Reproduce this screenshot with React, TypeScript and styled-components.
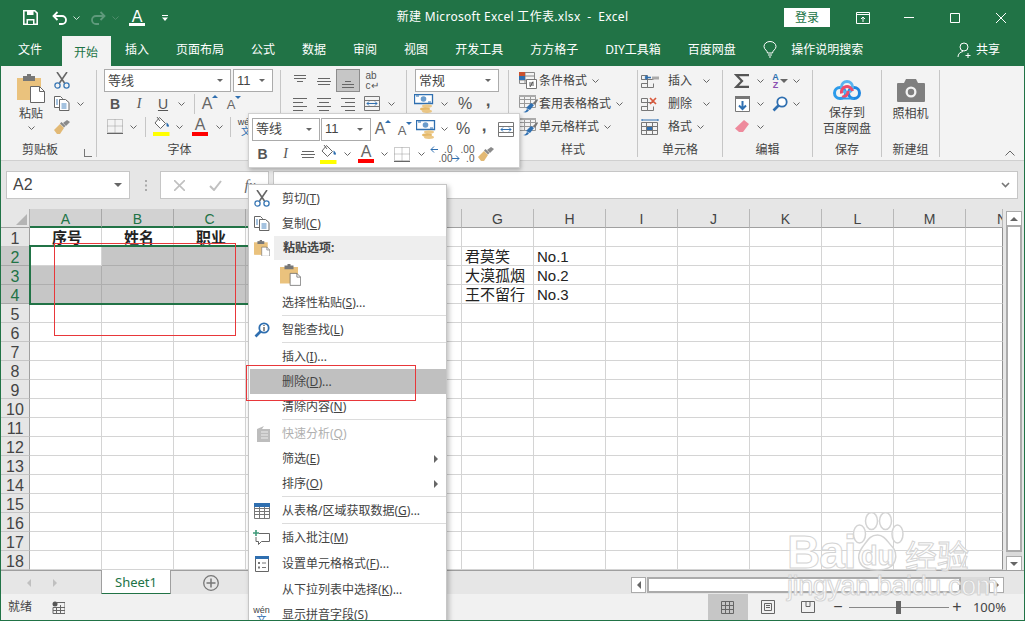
import React from 'react'
import styled, { createGlobalStyle } from 'styled-components'

const UI = '"Noto Sans", "Noto Sans CJK SC", sans-serif'
const CELL = '"Liberation Sans", "Noto Sans CJK SC", sans-serif'
const GREEN = '#217346'
const TXT = '#444'

const Global = createGlobalStyle`
  html, body { margin: 0; padding: 0; background: #fff; }
  * { box-sizing: border-box; }
  svg { display: block; flex: none; }
`

const Win = styled.div`
  position: relative;
  width: 1025px;
  height: 621px;
  overflow: hidden;
  border: 1px solid ${GREEN};
  border-top: none;
  display: flex;
  flex-direction: column;
  font: 12px/16px ${UI};
  color: ${TXT};
  background: #e6e6e6;
`

/* ---------- generic small parts ---------- */
const Slot = styled.div<{ $w: number; $ml?: number; $active?: boolean }>`
  flex: none;
  width: ${p => p.$w}px;
  margin-left: ${p => p.$ml || 0}px;
  height: 100%;
  display: flex;
  align-items: center;
  justify-content: center;
  background: ${p => (p.$active ? '#c6c6c6' : 'transparent')};
  outline: ${p => (p.$active ? '1px solid #8c8c8c' : 'none')};
  outline-offset: -1px;
`
const Tri = styled.i<{ $dir?: string; $c?: string; $s?: number }>`
  display: block;
  flex: none;
  width: 0;
  height: 0;
  border: ${p => p.$s || 4}px solid transparent;
  ${p => (p.$dir === 'up' ? `border-bottom-color:${p.$c || '#666'};border-top-width:0;` : '')}
  ${p => (p.$dir === 'left' ? `border-right-color:${p.$c || '#666'};border-left-width:0;` : '')}
  ${p => (p.$dir === 'right' ? `border-left-color:${p.$c || '#666'};border-right-width:0;` : '')}
  ${p => (!p.$dir || p.$dir === 'down' ? `border-top-color:${p.$c || '#666'};border-bottom-width:0;` : '')}
`
const Chevron = ({ c = '#666' }: { c?: string }) => (
  <svg width="7" height="4" viewBox="0 0 7 4"><path d="M.5.500l3 3 3-3" fill="none" stroke={c} /></svg>
)
const Caret = ({ w = 12, ml = 0 }: { w?: number; ml?: number }) => (
  <Slot $w={w} $ml={ml}><Chevron /></Slot>
)

/* ---------- icons ---------- */
const PasteIcon = ({ w = 28 }: { w?: number }) => (
  <svg width={w} height={w * 29 / 28} viewBox="0 0 28 29">
    <path d="M0 4h24v22H0z" fill="#eac27d" />
    <path d="M6 2h12v5H6z" fill="#777" />
    <path d="M10 0h4v3h-4z" fill="#777" />
    <path d="M13.500 12.500h9l5 5v11h-14z" fill="#fff" stroke="#666" />
    <path d="M22.500 12.500v5h5" fill="none" stroke="#666" />
  </svg>
)
const CutIcon = () => (
  <svg width="16" height="17" viewBox="0 0 16 17">
    <path d="M3 0l7.500 11M13 0L5.500 11" stroke="#666" strokeWidth="1.600" fill="none" />
    <circle cx="3.500" cy="13.500" r="2.600" fill="none" stroke="#3a78b5" strokeWidth="1.300" />
    <circle cx="12.500" cy="13.500" r="2.600" fill="none" stroke="#3a78b5" strokeWidth="1.300" />
  </svg>
)
const CopyIcon = () => (
  <svg width="16" height="15" viewBox="0 0 16 15">
    <path d="M.5.500h6l2 2v9h-8z" fill="#fff" stroke="#666" />
    <path d="M5.500 3.500h6l3.500 3v8h-9.500z" fill="#fff" stroke="#666" />
    <path d="M7.500 8h5M7.500 10h5M7.500 12h5M2 4h2M2 6h2M2 8h2" stroke="#4a86c0" />
  </svg>
)
const BrushIcon = () => (
  <svg width="16" height="14" viewBox="0 0 16 14">
    <path d="M0 10l6-6 4 4-4 6H3z" fill="#e2b975" />
    <path d="M6 3.500l1.500-1.500 4 4L10 7.500z" fill="#888" />
    <path d="M9 3l4-3 3 2-4 4z" fill="#8a8a8a" />
  </svg>
)
const BorderIcon = () => (
  <svg width="16" height="15" viewBox="0 0 16 15">
    <path d="M.5.500h15v13H.5zM8 .5v13M.5 7h15" fill="none" stroke="#999" strokeDasharray="1 1" />
    <path d="M0 14.500h16" stroke="#666" />
  </svg>
)
const FillIcon = () => (
  <svg width="17" height="19" viewBox="0 0 17 19">
    <path d="M6.500.5l6 6-5 5-5.500-5.500z" fill="#fff" stroke="#666" />
    <path d="M4 0l3 4" stroke="#666" />
    <path d="M13.500 5.500c1.500 1 2.500 2.500 2.500 3.500s-2 1-2.500 0z" fill="#2f6fb0" />
    <path d="M0 15h16.500v4H0z" fill="#ff0" />
  </svg>
)
const Lines = ({ kind }: { kind: string }) => {
  const rows: Record<string, [number, number, number][]> = {
    top: [[2, 14, 2], [2, 14, 5], [5, 11, 8]],
    mid: [[2, 14, 5], [1, 15, 8], [2, 14, 11]],
    bottom: [[5, 11, 8], [2, 14, 11], [2, 14, 14]],
    left: [[1, 15, 2], [1, 11, 6], [1, 15, 10], [1, 11, 14]],
    center: [[1, 15, 2], [3, 13, 6], [1, 15, 10], [3, 13, 14]],
    right: [[1, 15, 2], [5, 15, 6], [1, 15, 10], [5, 15, 14]],
  }
  return (
    <svg width="16" height="16" viewBox="0 0 16 16">
      {rows[kind].map(([a, b, y]) => <path key={y} d={`M${a} ${y + 0.5}H${b}`} stroke="#666" />)}
    </svg>
  )
}
const MergeIcon = () => (
  <svg width="16" height="15" viewBox="0 0 16 15">
    <path d="M.5.500h15v14H.5zM.5 4.500h15M.5 10.500h15" fill="none" stroke="#777" />
    <path d="M3 7.500h10M3 7.500l2-2M3 7.500l2 2M13 7.500l-2-2M13 7.500l-2 2" fill="none" stroke="#2f6fb0" />
  </svg>
)
const CurrencyIcon = () => (
  <svg width="20" height="19" viewBox="0 0 20 19">
    <path d="M.5.500h18v9H.5z" fill="#fff" stroke="#2f6fb0" strokeWidth="1.300" />
    <circle cx="9.500" cy="5" r="2.800" fill="#6a9ccc" />
    <path d="M2 2h3M14 8h3" stroke="#2f6fb0" />
    <ellipse cx="13" cy="12" rx="5" ry="1.800" fill="#ecc886" />
    <ellipse cx="11" cy="15" rx="5" ry="1.800" fill="#e5b868" />
    <ellipse cx="13" cy="17.200" rx="5" ry="1.700" fill="#ecc886" />
  </svg>
)
const GridBase = () => (
  <path d="M.5 2.500h6v4h-6zM.5 6.500h12M.5 10.500h6v4h-6zM6.500 6.500v8h6v-4" fill="none" stroke="#777" />
)
const InsertIcon = () => (
  <svg width="18" height="16" viewBox="0 0 18 16">
    <GridBase />
    <path d="M11 3.500h7v3h-7z" fill="#aaa" />
    <path d="M10 4.500H4M4 4.500l2-2M4 4.500l2 2" fill="none" stroke="#2f6fb0" strokeWidth="1.300" />
  </svg>
)
const DeleteIcon = () => (
  <svg width="18" height="16" viewBox="0 0 18 16">
    <GridBase />
    <path d="M9 2l6 6M15 2L9 8" stroke="#d9583b" strokeWidth="1.700" />
  </svg>
)
const FormatIcon = () => (
  <svg width="18" height="17" viewBox="0 0 18 17">
    <path d="M1 1v2M17 1v2M1 2h16" stroke="#2f6fb0" />
    <path d="M.5 4.500h16v12H.5zM.5 8.500h16M.5 12.500h16M5.500 4.500v12M11.500 4.500v12" fill="none" stroke="#777" />
    <path d="M6 9h5v3H6z" fill="#2f6fb0" />
  </svg>
)
const CondIcon = () => (
  <svg width="18" height="17" viewBox="0 0 18 17">
    <path d="M.5.500h15v11H.5zM.5 4h15M.5 8h15M6 .5v11" fill="none" stroke="#888" />
    <path d="M0 0h6v4H0z" fill="#c9502e" />
    <path d="M0 4h6v4H0z" fill="#2f6fb0" />
    <path d="M7.500 7.500h10v9h-10z" fill="#fff" stroke="#777" />
    <path d="M10 11h5M10 13h5M14 9.500l-3 5.500" stroke="#555" />
  </svg>
)
const TableBrushIcon = () => (
  <svg width="19" height="18" viewBox="0 0 19 18">
    <path d="M.5.500h16v12H.5zM.5 4.500h16M.5 8.500h16M5.500.5v12M11.500.5v12" fill="none" stroke="#999" />
    <path d="M0 0h17v2H0z" fill="#aaa" />
    <path d="M7 13l5-5 3 2-4 5z" fill="#2f6fb0" />
    <path d="M14 8l4-4 1 1-3 5z" fill="#777" />
    <path d="M4 17c2 0 3-1 4-3l2 1c-1 2-3 3-6 2z" fill="#2f6fb0" />
  </svg>
)
const SigmaIcon = () => (
  <svg width="16" height="14" viewBox="0 0 16 14">
    <path d="M15 1.200H2.500L8 7l-5.500 5.800H15" fill="none" stroke="#555" strokeWidth="2.200" />
  </svg>
)
const DownFillIcon = () => (
  <svg width="15" height="16" viewBox="0 0 15 16">
    <path d="M.5.500h14v15H.5z" fill="#fff" stroke="#777" />
    <path d="M0 0h15v3H0z" fill="#777" />
    <path d="M7.500 5v8M4 9.500l3.500 3.500L11 9.500" fill="none" stroke="#2f6fb0" strokeWidth="2" />
  </svg>
)
const Magnifier = ({ info }: { info?: boolean }) => (
  <svg width="16" height="16" viewBox="0 0 16 16">
    <circle cx="10" cy="6" r="4.700" fill="#fff" stroke="#2f6fb0" strokeWidth="1.800" />
    <path d="M6.500 9.500L1.500 14.500" stroke="#2f6fb0" strokeWidth="2.600" />
    {info && <path d="M10 3v1M10 5v4" stroke="#555" strokeWidth="1.300" />}
  </svg>
)
const EraserIcon = () => (
  <svg width="14" height="13" viewBox="0 0 14 13">
    <path d="M9 0l5 4-6 8H4L0 8.500z" fill="#ee8a9c" />
  </svg>
)
const CloudIcon = () => (
  <svg width="28" height="22" viewBox="0 0 28 22">
    <circle cx="7" cy="14" r="5.500" fill="none" stroke="#2b9bea" strokeWidth="3" />
    <circle cx="21" cy="14" r="5.500" fill="none" stroke="#1e86e0" strokeWidth="3" />
    <circle cx="14" cy="8" r="5.500" fill="none" stroke="#59b4f0" strokeWidth="3" />
    <path d="M8.500 14.500a5.500 5.500 0 0 1 11 -2.500" fill="none" stroke="#ee4d6b" strokeWidth="3" />
    <path d="M9 18a5.500 5.500 0 0 0 6-6" fill="none" stroke="#ee4d6b" strokeWidth="3" />
    <path d="M7 19.500h14" stroke="#2b9bea" strokeWidth="2" />
  </svg>
)
const CameraIcon = () => (
  <svg width="28" height="23" viewBox="0 0 28 23">
    <path d="M1 4h6l2-4h10l2 4h6a1 1 0 0 1 1 1v17a1 1 0 0 1-1 1H1a1 1 0 0 1-1-1V5a1 1 0 0 1 1-1z" fill="#7f7f7f" />
    <circle cx="14" cy="13" r="5.500" fill="#f3f3f3" />
    <circle cx="14" cy="13" r="3.200" fill="#7f7f7f" />
  </svg>
)
const QuickIcon = () => (
  <svg width="16" height="16" viewBox="0 0 16 16">
    <path d="M3 3l7-3-2 3h8v13H3z" fill="#bdbdbd" />
    <path d="M7 6h7M7 9h7M7 12h7" stroke="#eee" />
  </svg>
)
const TableIcon = () => (
  <svg width="16" height="16" viewBox="0 0 16 16">
    <path d="M.5.500h15v15H.5zM.5 5.500h15M.5 8.500h15M.5 11.500h15M5.500 4v11M10.500 4v11" fill="#fff" stroke="#777" />
    <path d="M0 0h16v4H0z" fill="#2f6fb0" />
  </svg>
)
const CommentIcon = () => (
  <svg width="17" height="16" viewBox="0 0 17 16">
    <path d="M6 3.500h10.500v8h-8l-3 3v-3H3V7" fill="#fff" stroke="#666" />
    <path d="M3 0v6M0 3h6" stroke="#3f9a7a" strokeWidth="1.600" />
  </svg>
)
const CellFormatIcon = () => (
  <svg width="14" height="16" viewBox="0 0 14 16">
    <path d="M.5.500h13v15H.5z" fill="#fff" stroke="#666" />
    <path d="M0 0h14v3H0z" fill="#2f6fb0" />
    <path d="M3 6h2v2H3zM3 10.500h2v2H3z" fill="#777" />
    <path d="M7 7h4M7 11.500h4" stroke="#777" />
  </svg>
)

/* ---------- title bar ---------- */
const TitleBar = styled.div`
  height: 33px;
  flex: none;
  background: ${GREEN};
  color: #fff;
  display: grid;
  grid-template-columns: 1fr auto 1fr;
  align-items: stretch;
`
const Qat = styled.div`
  display: flex;
  align-items: center;
  padding-left: 20px;
  height: 35px;
`
const Title = styled.div`
  line-height: 33px;
  white-space: pre;
  letter-spacing: .3px;
`
const WinControls = styled.div`
  display: flex;
  justify-content: flex-end;
  align-items: center;
`
const Login = styled.div`
  width: 46px;
  height: 19px;
  margin-top: -1px;
  background: #fff;
  color: ${GREEN};
  text-align: center;
  line-height: 19px;
  margin-right: 10px;
`
const QatA = styled.div`
  font: 16px/13px ${CELL};
  color: #fff;
  text-align: center;
  width: 16px;
  border-bottom: 3px solid #fff;
`
const WhiteChevron = () => <Chevron c="#cfe3d8" />

/* ---------- tabs ---------- */
const TabBar = styled.div`
  height: 33px;
  flex: none;
  background: ${GREEN};
  color: #fff;
  display: flex;
  padding-left: 3.500px;
`
const Tab = styled.div<{ $active?: boolean }>`
  padding: ${p => (p.$active ? '3px 12.500px 0' : '0 13.500px')};
  margin: ${p => (p.$active ? '3px 1px 0 6px' : '0')};
  line-height: ${p => (p.$active ? '27px' : '33px')};
  background: ${p => (p.$active ? '#f3f3f3' : 'transparent')};
  color: ${p => (p.$active ? GREEN : '#fff')};
  white-space: nowrap;
`
const TellMe = styled.div`
  display: flex;
  align-items: center;
  gap: 14px;
  margin-left: 14px;
`
const Share = styled.div`
  margin-left: auto;
  padding-right: 24px;
  display: flex;
  align-items: center;
  gap: 4px;
`

/* ---------- ribbon ---------- */
const Ribbon = styled.div`
  height: 95px;
  flex: none;
  display: flex;
  background: #f3f3f3;
  border-bottom: 1px solid #d0d0d0;
  padding-top: 3px;
`
const Group = styled.div<{ $w: number }>`
  flex: none;
  width: ${p => p.$w}px;
  height: 87px;
  display: flex;
  flex-direction: column;
  border-right: 1px solid #c6c6c6;
  margin-top: 1px;
`
const GroupBody = styled.div`
  height: 71px;
  margin-top: -1px;
  display: flex;
  flex-direction: column;
`
const GroupLabel = styled.div<{ $pr?: number }>`
  margin-top: 3px;
  height: 14px;
  line-height: 14px;
  text-align: center;
  white-space: nowrap;
  padding-right: ${p => p.$pr || 0}px;
`
const Row = styled.div<{ $pl?: number }>`
  height: 23px;
  flex: none;
  display: flex;
  align-items: center;
  padding-left: ${p => p.$pl || 0}px;
  white-space: nowrap;
`
const ClipBody = styled.div`
  display: flex;
  height: 71px;
  margin-top: -1px;
`
const PasteBtn = styled.div`
  width: 44px;
  margin-left: 8px;
  padding-top: 5px;
  display: flex;
  flex-direction: column;
  align-items: center;
`
const PasteText = styled.div`
  margin-top: 2px;
  line-height: 18px;
  margin-bottom: 3px;
`
const ClipLabel = styled.div`
  margin-top: 3px;
  height: 14px;
  line-height: 14px;
  display: flex;
  align-items: center;
`
const ClipText = styled.div`
  width: 78px;
  text-align: center;
`
const Launcher = styled.div`
  width: 8px;
  height: 8px;
  margin: 6px 0 0 5px;
  border-left: 1px solid #777;
  border-bottom: 1px solid #777;
`
const Select = styled.div<{ $w: number; $ml?: number }>`
  flex: none;
  width: ${p => p.$w}px;
  height: 23px;
  margin-left: ${p => p.$ml || 0}px;
  border: 1px solid #ababab;
  background: #fff;
  display: flex;
  align-items: center;
  justify-content: space-between;
  padding: 0 7px 0 3px;
  font-size: 13px;
  color: ${TXT};
  font-family: ${CELL};
`
const Letter = styled.span<{ $b?: boolean; $i?: boolean; $u?: boolean }>`
  font: ${p => (p.$i ? 'italic ' : '')}${p => (p.$b ? 'bold ' : '')}14px/16px ${p => (p.$i ? '"Liberation Serif", serif' : CELL)};
  color: #555;
  text-decoration: ${p => (p.$u ? 'underline' : 'none')};
`
const VRule = styled.div<{ $l: number; $r: number }>`
  width: 1px;
  height: 20px;
  flex: none;
  margin: 0 ${p => p.$r}px 0 ${p => p.$l}px;
  background: #c6c6c6;
`
const ColorA = styled.div<{ $c: string }>`
  width: 16px;
  font: 16px/14px ${CELL};
  color: #666;
  text-align: center;
  border-bottom: 4px solid ${p => p.$c};
`
const SizeA = styled.div`
  display: flex;
  align-items: flex-start;
  font: 16px/18px ${CELL};
  color: #666;
`
const SizeASmall = styled(SizeA)`
  font-size: 13px;
  padding-top: 3px;
`
const Wen = styled.div<{ $s?: number }>`
  font: ${p => p.$s || 9}px/9px ${CELL};
  color: #444;
  text-align: center;
`
const Zi = styled.div`
  font-size: 10px;
  line-height: 9px;
  color: #2f6fb0;
  text-align: center;
`
const WrapText = styled.div`
  font: 10px/10px ${CELL};
  color: #555;
`
const Percent = styled.div`
  font: 16px/20px ${CELL};
  color: #555;
`
const Comma = styled.div`
  font: bold 17px/16px ${CELL};
  color: #555;
  margin-top: -6px;
`
const StyleBtn = styled.div`
  margin-left: 1px;
`
const CellText = styled.div<{ $ml: number }>`
  margin-left: ${p => p.$ml}px;
`
const SortIcon = styled.div`
  display: flex;
  align-items: center;
  gap: 1px;
`
const AZ = styled.div`
  font: bold 9px/8px ${CELL};
  text-align: center;
  color: #2f6fb0;
  & > b { display: block; color: #8a4fb0; }
`
const TallBtn = styled.div`
  height: 71px;
  display: flex;
  flex-direction: column;
  align-items: center;
  padding-top: 10px;
  text-align: center;
  line-height: 16px;
`
const TallText = styled.div`
  margin-top: 4px;
`
const Collapse = styled.div`
  margin: auto 9px 4px auto;
`
const DecimalBtn = styled.div`
  display: grid;
  grid-template-columns: auto auto;
  column-gap: 1px;
  font: 10px/9px ${CELL};
  color: #555;
  align-items: center;
  justify-items: end;
`

/* ---------- formula bar ---------- */
const FormulaBar = styled.div`
  height: 48px;
  flex: none;
  padding: 10px 6px 10px 5px;
  display: flex;
  background: #e6e6e6;
`
const Box = styled.div`
  height: 28px;
  background: #fff;
  border: 1px solid #c6c6c6;
  display: flex;
  align-items: center;
`
const NameBox = styled(Box)`
  width: 124px;
  justify-content: space-between;
  padding: 0 7px 0 6px;
  font: 16px ${CELL};
  color: #444;
`
const Dots = styled.div`
  width: 30px;
  display: flex;
  align-items: center;
  justify-content: center;
`
const FxBox = styled(Box)`
  width: 109px;
  margin-right: 4px;
`
const FxGlyph = styled.div`
  font: italic 15px "Liberation Serif", serif;
  color: #666;
`
const InputBox = styled(Box)`
  flex: 1;
  justify-content: flex-end;
  padding-right: 4px;
`

/* ---------- sheet ---------- */
const Workspace = styled.div`
  height: 361px;
  flex: none;
  display: flex;
`
const Sheet = styled.div`
  position: relative;
  width: 1002px;
  height: 361px;
  overflow: hidden;
  display: grid;
  grid-template-columns: 29px repeat(13, 72px) 37px;
  grid-auto-rows: 19px;
  background: #fff;
  font: 15px/18px ${CELL};
`
const Corner = styled.div`
  background: #e6e6e6;
  border-right: 1px solid #b0b0b0;
  border-bottom: 1px solid #a0a0a0;
  display: flex;
  align-items: flex-end;
  justify-content: flex-end;
  padding: 0 2px 2px 0;
`
const CornerMark = styled.div`
  width: 11px;
  height: 11px;
  background: #b4b4b4;
  clip-path: polygon(100% 0, 100% 100%, 0 100%);
`
const ColHead = styled.div<{ $sel?: boolean; $clip?: boolean }>`
  background: ${p => (p.$sel ? '#d2d2d2' : '#e6e6e6')};
  color: ${p => (p.$sel ? GREEN : TXT)};
  border-right: 1px solid ${p => (p.$sel ? '#a8a8a8' : '#b8b8b8')};
  border-bottom: ${p => (p.$sel ? `2px solid ${GREEN}` : '1px solid #a0a0a0')};
  font-size: 14px;
  line-height: 18px;
  padding-top: 1px;
  text-align: ${p => (p.$clip ? 'left' : 'center')};
  padding-left: ${p => (p.$clip ? '31px' : '0')};
  overflow: hidden;
`
const RowHead = styled.div<{ $sel?: boolean }>`
  background: ${p => (p.$sel ? '#c9c9c9' : '#e6e6e6')};
  color: ${p => (p.$sel ? GREEN : TXT)};
  border-right: 1px solid #a0a0a0;
  border-bottom: 1px solid ${p => (p.$sel ? '#a8a8a8' : '#c6c6c6')};
  font-size: 16px;
  line-height: 19px;
  padding-top: 1px;
  text-align: center;
`
const Cell = styled.div<{ $sel?: boolean; $bold?: boolean; $last?: boolean }>`
  background: ${p => (p.$sel ? '#c6c6c6' : '#fff')};
  border-right: 1px solid ${p => (p.$last ? '#8f8f8f' : p.$sel ? '#aeaeae' : '#d4d4d4')};
  border-bottom: 1px solid ${p => (p.$sel ? '#aeaeae' : '#d4d4d4')};
  padding: 1px 0 0 3px;
  color: #222;
  white-space: nowrap;
  overflow: hidden;
  font-weight: ${p => (p.$bold ? 700 : 400)};
  text-align: ${p => (p.$bold ? 'center' : 'left')};
`
const Selection = styled.div`
  position: absolute;
  left: 28px;
  top: 36px;
  width: 290px;
  height: 60px;
  border: 2px solid ${GREEN};
  pointer-events: none;
`
const VScroll = styled.div`
  margin: 2px 2px 0 3px;
  width: 16px;
  display: flex;
  flex-direction: column;
  height: 360px;
`
const ScrollBtn = styled.div<{ $h?: number }>`
  flex: none;
  height: ${p => p.$h || 15}px;
  background: #fff;
  border: 1px solid #ababab;
  display: flex;
  align-items: center;
  justify-content: center;
`
const VThumb = styled.div`
  height: 326px;
  flex: none;
  background: #fff;
  border: 2px solid #ababab;
  border-top-width: 1px;
`
const VTrack = styled.div`
  flex: 1;
  background: #dadada;
`

/* ---------- sheet tabs + status ---------- */
const Footer = styled.div`
  height: 24px;
  flex: none;
  display: flex;
  align-items: stretch;
  background: #e6e6e6;
  border-top: 1px solid #9f9f9f;
`
const NavArrows = styled.div`
  width: 100px;
  display: flex;
  align-items: center;
  padding-left: 26px;
  gap: 22px;
`
const SheetTab = styled.div`
  width: 70px;
  margin-top: -1px;
  height: 25px;
  background: #fff;
  border: 1px solid #9f9f9f;
  border-top: none;
  border-bottom: 2px solid ${GREEN};
  color: ${GREEN};
  text-align: center;
  font: 13px/25px ${UI};
`
const AddSheet = styled.div`
  margin-left: 32px;
  display: flex;
  align-items: center;
`
const HScroll = styled.div`
  margin: 6px 20px 1px auto;
  display: flex;
  width: 373px;
`
const HThumb = styled.div`
  width: 314px;
  margin-left: 1px;
  background: #fff;
  border: 2px solid #ababab;
`
const HTrack = styled.div`
  flex: 1;
  background: #dadada;
`
const ArrowBox = styled(ScrollBtn)`
  width: 15px;
  height: 100%;
`
const Status = styled.div`
  height: 26px;
  flex: none;
  background: #f1f1f1;
  display: flex;
  align-items: center;
  padding-left: 7px;
`
const ViewBtns = styled.div`
  margin-left: auto;
  display: flex;
  height: 100%;
`
const ViewBtn = styled(Slot)`
  background: ${p => (p.$active ? '#c6c6c6' : 'transparent')};
  outline: none;
`
const Zoom = styled.div`
  display: flex;
  align-items: center;
  margin-right: 18px;
  color: #444;
`
const ZoomTrack = styled.div`
  position: relative;
  width: 100px;
  height: 1px;
  margin: 0 1px 0 4px;
  background: #888;
`
const ZoomThumb = styled.div`
  position: absolute;
  left: 47px;
  top: -6px;
  width: 5px;
  height: 13px;
  background: #666;
`
const ZoomSign = styled.div`
  font: 16px/16px ${CELL};
  width: 14px;
  text-align: center;
  color: #444;
`
const ZoomMinus = styled(ZoomSign)`
  margin-left: 3px;
`
const ZoomText = styled.div`
  font: 13px/16px ${UI};
  margin-left: 9px;
`

/* ---------- mini toolbar ---------- */
const MiniBar = styled.div`
  position: absolute;
  left: 247px;
  top: 113px;
  width: 272px;
  height: 55px;
  background: #fff;
  border: 1px solid #d0d0d0;
  box-shadow: 1px 2px 4px rgba(0, 0, 0, .25);
  padding: 3px 0 0 3px;
`
const MiniRow = styled.div<{ $h: number; $mt?: number }>`
  height: ${p => p.$h}px;
  margin-top: ${p => p.$mt || 0}px;
  display: flex;
  align-items: center;
`

/* ---------- context menu ---------- */
const Menu = styled.div`
  position: absolute;
  left: 247px;
  top: 184px;
  width: 199px;
  height: 460px;
  background: #fff;
  border: 1px solid #c6c6c6;
  box-shadow: 2px 2px 5px rgba(0, 0, 0, .25);
  padding-top: 1px;
`
const Item = styled.div<{ $h?: number; $hot?: boolean; $off?: boolean }>`
  height: ${p => p.$h || 25}px;
  margin-left: ${p => (p.$hot ? 1 : 0)}px;
  display: flex;
  align-items: center;
  background: ${p => (p.$hot ? '#c0c0c0' : 'transparent')};
  color: ${p => (p.$off ? '#b0b0b0' : TXT)};
`
const ItemIcon = styled.div<{ $hot?: boolean }>`
  width: ${p => (p.$hot ? 24 : 25)}px;
  flex: none;
  display: flex;
  flex-direction: column;
  align-items: center;
  justify-content: center;
`
const ItemText = styled.div`
  margin-left: 8px;
  white-space: nowrap;
`
const ItemHead = styled.div`
  flex: 1;
  height: 24px;
  line-height: 24px;
  padding-left: 9px;
  background: #eeeeee;
  font-weight: 700;
`
const PasteOption = styled.div`
  margin-left: 6px;
`
const Sub = styled.div`
  margin-left: auto;
  margin-right: 8px;
`
const MenuSep = styled.div`
  height: 2px;
  margin-left: 33px;
  border-top: 1px solid #dcdcdc;
`

/* ---------- annotation + watermark ---------- */
const RedBox = styled.div<{ $l: number; $t: number; $w: number; $h: number }>`
  position: absolute;
  left: ${p => p.$l}px;
  top: ${p => p.$t}px;
  width: ${p => p.$w}px;
  height: ${p => p.$h}px;
  border: 1px solid #e8373a;
  pointer-events: none;
`
const Watermark = styled.div`
  position: absolute;
  left: 786px;
  top: 512px;
  width: 190px;
  color: rgba(255, 255, 255, .85);
  -webkit-text-stroke: 1px #d4d4d4;
  pointer-events: none;
`
const MarkTop = styled.div`
  display: flex;
  align-items: flex-end;
  height: 60px;
`
const MarkBai = styled.div`
  font: bold 46px/40px ${CELL};
  width: 66px;
  letter-spacing: -1px;
`
const Paw = styled.div`
  position: relative;
  width: 55px;
  height: 60px;
  margin-left: -3px;
`
const MarkDu = styled.div`
  position: absolute;
  left: 11px;
  bottom: 2px;
  font: bold 27px/28px ${CELL};
`
const MarkJy = styled.div`
  font: 32px/36px "Noto Sans CJK SC", sans-serif;
  white-space: nowrap;
`
const MarkUrl = styled.div`
  margin-top: 3px;
  font: 27px/23px ${CELL};
  white-space: nowrap;
  letter-spacing: -.4px;
`

const COLS = 'ABCDEFGHIJKLMN'.split('')
const DATA: Record<string, string> = {
  A1: '序号', B1: '姓名', C1: '职业',
  G2: '君莫笑', H2: 'No.1', G3: '大漠孤烟', H3: 'No.2', G4: '王不留行', H4: 'No.3',
}
const SEL_COLS = 'ABCD'
const TABS = ['插入', '页面布局', '公式', '数据', '审阅', '视图', '开发工具', '方方格子', 'DIY工具箱', '百度网盘']

const isSel = (c: string, r: number) => SEL_COLS.includes(c) && r >= 2 && r <= 4 && !(c === 'A' && r === 2)

const Grid = () => (
  <Sheet>
    <Corner><CornerMark /></Corner>
    {COLS.map(c => <ColHead key={c} $sel={SEL_COLS.includes(c)} $clip={c === 'N'}>{c}</ColHead>)}
    {Array.from({ length: 18 }, (_, i) => i + 1).map(r => (
      <React.Fragment key={r}>
        <RowHead $sel={r >= 2 && r <= 4}>{r}</RowHead>
        {COLS.map(c => (
          <Cell key={c} $sel={isSel(c, r)} $bold={r === 1} $last={c === 'N'}>{DATA[c + r]}</Cell>
        ))}
      </React.Fragment>
    ))}
    <Selection />
  </Sheet>
)

const ContextMenu = () => (
  <Menu>
    <Item><ItemIcon><CutIcon /></ItemIcon><ItemText>剪切(<u>T</u>)</ItemText></Item>
    <Item><ItemIcon><CopyIcon /></ItemIcon><ItemText>复制(<u>C</u>)</ItemText></Item>
    <Item $h={24}><ItemIcon><PasteIcon w={16} /></ItemIcon><ItemHead>粘贴选项:</ItemHead></Item>
    <Item $h={30}><ItemIcon /><PasteOption><PasteIcon w={21} /></PasteOption></Item>
    <Item><ItemIcon /><ItemText>选择性粘贴(<u>S</u>)...</ItemText></Item>
    <MenuSep />
    <Item><ItemIcon><Magnifier info /></ItemIcon><ItemText>智能查找(<u>L</u>)</ItemText></Item>
    <MenuSep />
    <Item><ItemIcon /><ItemText>插入(<u>I</u>)...</ItemText></Item>
    <Item $hot><ItemIcon $hot /><ItemText>删除(<u>D</u>)...</ItemText></Item>
    <Item><ItemIcon /><ItemText>清除内容(<u>N</u>)</ItemText></Item>
    <MenuSep />
    <Item $off><ItemIcon><QuickIcon /></ItemIcon><ItemText>快速分析(<u>Q</u>)</ItemText></Item>
    <Item><ItemIcon /><ItemText>筛选(<u>E</u>)</ItemText><Sub><Tri $dir="right" $s={4} /></Sub></Item>
    <Item><ItemIcon /><ItemText>排序(<u>O</u>)</ItemText><Sub><Tri $dir="right" $s={4} /></Sub></Item>
    <MenuSep />
    <Item><ItemIcon><TableIcon /></ItemIcon><ItemText>从表格/区域获取数据(<u>G</u>)...</ItemText></Item>
    <MenuSep />
    <Item $h={26}><ItemIcon><CommentIcon /></ItemIcon><ItemText>插入批注(<u>M</u>)</ItemText></Item>
    <Item $h={26}><ItemIcon><CellFormatIcon /></ItemIcon><ItemText>设置单元格格式(<u>F</u>)...</ItemText></Item>
    <Item><ItemIcon /><ItemText>从下拉列表中选择(<u>K</u>)...</ItemText></Item>
    <Item><ItemIcon><Wen>wén</Wen><Zi>文</Zi></ItemIcon><ItemText>显示拼音字段(<u>S</u>)</ItemText></Item>
  </Menu>
)

const MiniToolbar = () => (
  <MiniBar>
    <MiniRow $h={24}>
      <Select $w={68}>等线<Tri $s={3} /></Select>
      <Select $w={50} $ml={1}>11<Tri $s={3} /></Select>
      <Slot $w={22} $ml={1}><SizeA>A<Tri $dir="up" $c="#2f6fb0" $s={3} /></SizeA></Slot>
      <Slot $w={22}><SizeASmall>A<Tri $dir="down" $c="#2f6fb0" $s={3} /></SizeASmall></Slot>
      <Slot $w={20}><CurrencyIcon /></Slot>
      <Caret w={16} />
      <Slot $w={22}><Percent>%</Percent></Slot>
      <Slot $w={20}><Comma>,</Comma></Slot>
      <Slot $w={24}><MergeIcon /></Slot>
    </MiniRow>
    <MiniRow $h={22} $mt={2}>
      <Slot $w={23} $ml={-1}><Letter $b>B</Letter></Slot>
      <Slot $w={23}><Letter $i>I</Letter></Slot>
      <Slot $w={21}><Lines kind="mid" /></Slot>
      <Slot $w={20}><FillIcon /></Slot>
      <Caret w={18} />
      <Slot $w={20}><ColorA $c="#f00">A</ColorA></Slot>
      <Caret w={16} />
      <Slot $w={20}><BorderIcon /></Slot>
      <Caret w={18} />
      <Slot $w={22}>
        <DecimalBtn>
          <svg width="8" height="7" viewBox="0 0 8 7"><path d="M8 3.500H1M1 3.500l3-3M1 3.500l3 3" fill="none" stroke="#2f6fb0" /></svg>
          <span>.0</span><span />
          <span>.00</span>
        </DecimalBtn>
      </Slot>
      <Slot $w={22}>
        <DecimalBtn>
          <span />
          <span>.00</span>
          <svg width="8" height="7" viewBox="0 0 8 7"><path d="M0 3.500h7M7 3.500l-3-3M7 3.500l-3 3" fill="none" stroke="#2f6fb0" /></svg>
          <span>.0</span>
        </DecimalBtn>
      </Slot>
      <Slot $w={24}><BrushIcon /></Slot>
    </MiniRow>
  </MiniBar>
)

const RibbonPanel = () => (
  <Ribbon>
    <Group $w={96}>
      <ClipBody>
        <PasteBtn>
          <PasteIcon />
          <PasteText>粘贴</PasteText>
          <Chevron />
        </PasteBtn>
        <div>
          <Row><Slot $w={18}><CutIcon /></Slot></Row>
          <Row><Slot $w={18}><CopyIcon /></Slot><Caret w={18} /></Row>
          <Row><Slot $w={18}><BrushIcon /></Slot></Row>
        </div>
      </ClipBody>
      <ClipLabel><ClipText>剪贴板</ClipText><Launcher /></ClipLabel>
    </Group>
    <Group $w={184}>
      <GroupBody>
        <Row $pl={7}>
          <Select $w={127}>等线<Tri $s={3} /></Select>
          <Select $w={40} $ml={2}>11<Tri $s={3} /></Select>
        </Row>
        <Row $pl={6}>
          <Slot $w={24}><Letter $b>B</Letter></Slot>
          <Slot $w={24}><Letter $i>I</Letter></Slot>
          <Slot $w={24}><Letter $u>U</Letter></Slot>
          <Caret />
          <VRule $l={7} $r={3} />
          <Slot $w={24}><SizeA>A<Tri $dir="up" $c="#2f6fb0" $s={3} /></SizeA></Slot>
          <Slot $w={24}><SizeASmall>A<Tri $dir="down" $c="#2f6fb0" $s={3} /></SizeASmall></Slot>
        </Row>
        <Row $pl={6}>
          <Slot $w={24}><BorderIcon /></Slot>
          <Caret />
          <VRule $l={6} $r={3} />
          <Slot $w={24}><FillIcon /></Slot>
          <Caret />
          <Slot $w={30}><ColorA $c="#f00">A</ColorA></Slot>
          <Caret w={8} />
          <VRule $l={7} $r={3} />
          <Slot $w={24}><div><Wen>wén</Wen><Zi>文</Zi></div></Slot>
        </Row>
      </GroupBody>
      <GroupLabel $pr={18}>字体</GroupLabel>
    </Group>
    <Group $w={126}>
      <GroupBody>
        <Row $pl={7}>
          <Slot $w={24}><Lines kind="top" /></Slot>
          <Slot $w={24}><Lines kind="mid" /></Slot>
          <Slot $w={24} $active><Lines kind="bottom" /></Slot>
          <Slot $w={24}><WrapText>ab<br />c↵</WrapText></Slot>
        </Row>
        <Row $pl={7}>
          <Slot $w={24}><Lines kind="left" /></Slot>
          <Slot $w={24}><Lines kind="center" /></Slot>
          <Slot $w={24}><Lines kind="right" /></Slot>
          <Slot $w={24}><MergeIcon /></Slot>
          <Caret w={14} />
        </Row>
      </GroupBody>
    </Group>
    <Group $w={102}>
      <GroupBody>
        <Row><Select $w={84} $ml={8}>常规<Tri $s={3} /></Select></Row>
        <Row $pl={5}>
          <Slot $w={24}><CurrencyIcon /></Slot>
          <Caret w={16} />
          <Slot $w={26}><Percent>%</Percent></Slot>
          <Slot $w={20}><Comma>,</Comma></Slot>
        </Row>
      </GroupBody>
    </Group>
    <Group $w={129}>
      <GroupBody>
        <Row $pl={9}><Slot $w={20}><CondIcon /></Slot><StyleBtn>条件格式</StyleBtn><Caret w={16} /></Row>
        <Row $pl={9}><Slot $w={20}><TableBrushIcon /></Slot><StyleBtn>套用表格格式</StyleBtn><Caret w={16} /></Row>
        <Row $pl={9}><Slot $w={20}><TableBrushIcon /></Slot><StyleBtn>单元格样式</StyleBtn><Caret w={16} /></Row>
      </GroupBody>
      <GroupLabel>样式</GroupLabel>
    </Group>
    <Group $w={85}>
      <GroupBody>
        <Row $pl={2}><Slot $w={20}><InsertIcon /></Slot><CellText $ml={8}>插入</CellText><Caret w={16} ml={6} /></Row>
        <Row $pl={2}><Slot $w={20}><DeleteIcon /></Slot><CellText $ml={8}>删除</CellText><Caret w={16} ml={6} /></Row>
        <Row $pl={2}><Slot $w={20}><FormatIcon /></Slot><CellText $ml={8}>格式</CellText><Caret w={16} /></Row>
      </GroupBody>
      <GroupLabel>单元格</GroupLabel>
    </Group>
    <Group $w={90}>
      <GroupBody>
        <Row $pl={7}>
          <Slot $w={24}><SigmaIcon /></Slot><Caret />
          <Slot $w={24} $ml={2}><SortIcon><AZ>A<b>Z</b></AZ><Tri $s={4} /></SortIcon></Slot><Caret w={8} />
        </Row>
        <Row $pl={7}>
          <Slot $w={24}><DownFillIcon /></Slot><Caret />
          <Slot $w={24} $ml={2}><Magnifier /></Slot><Caret w={8} />
        </Row>
        <Row $pl={7}><Slot $w={24}><EraserIcon /></Slot><Caret /></Row>
      </GroupBody>
      <GroupLabel>编辑</GroupLabel>
    </Group>
    <Group $w={69}>
      <GroupBody>
        <TallBtn><CloudIcon /><TallText>保存到<br />百度网盘</TallText></TallBtn>
      </GroupBody>
      <GroupLabel>保存</GroupLabel>
    </Group>
    <Group $w={58}>
      <GroupBody>
        <TallBtn><CameraIcon /><TallText>照相机</TallText></TallBtn>
      </GroupBody>
      <GroupLabel>新建组</GroupLabel>
    </Group>
    <Collapse>
      <svg width="10" height="6" viewBox="0 0 10 6"><path d="M.5 5.500L5 1l4.500 4.500" fill="none" stroke="#666" /></svg>
    </Collapse>
  </Ribbon>
)

const App = () => (
  <Win>
    <Global />
    <TitleBar>
      <Qat>
        <Slot $w={18}>
          <svg width="15" height="15" viewBox="0 0 15 15">
            <path d="M.8.800h11l2.400 2.400v11H.8z" fill="none" stroke="#fff" strokeWidth="1.600" />
            <path d="M4 1h6.500v4H4zM3.500 9h8v5h-8z" fill="#fff" />
            <path d="M5 10.500h5v3.500H5z" fill={GREEN} />
          </svg>
        </Slot>
        <Slot $w={16} $ml={13}>
          <svg width="16" height="14" viewBox="0 0 16 14">
            <path d="M5.500 1L1.500 5l4 4M2 5h8a3.600 3.600 0 0 1 0 8H7" fill="none" stroke="#fff" strokeWidth="1.800" />
          </svg>
        </Slot>
        <Slot $w={10} $ml={3}><WhiteChevron /></Slot>
        <Slot $w={16} $ml={9}>
          <svg width="16" height="14" viewBox="0 0 16 14">
            <path d="M10.500 1l4 4-4 4M14 5H6a3.600 3.600 0 0 0 0 8h3" fill="none" stroke="#5f9a7c" strokeWidth="1.800" />
          </svg>
        </Slot>
        <Slot $w={10} $ml={4}><Chevron c="#4f8c6b" /></Slot>
        <Slot $w={16} $ml={9}><QatA>A</QatA></Slot>
        <Slot $w={12} $ml={14}>
          <svg width="6" height="6" viewBox="0 0 6 6"><path d="M0 .5h6" stroke="#fff" /><path d="M0 2.500h6L3 6z" fill="#fff" /></svg>
        </Slot>
      </Qat>
      <Title>新建 Microsoft Excel 工作表.xlsx  -  Excel</Title>
      <WinControls>
        <Login>登录</Login>
        <Slot $w={46}>
          <svg width="14" height="12" viewBox="0 0 14 12">
            <path d="M.5.500h13v11H.5zM.5 2.500h13" fill="none" stroke="#fff" />
            <path d="M7 10V5M5 7l2-2 2 2" fill="none" stroke="#fff" />
          </svg>
        </Slot>
        <Slot $w={46}><svg width="10" height="1" viewBox="0 0 10 1"><path d="M0 .5h10" stroke="#fff" /></svg></Slot>
        <Slot $w={46}><svg width="10" height="10" viewBox="0 0 10 10"><path d="M.5.500h9v9h-9z" fill="none" stroke="#fff" /></svg></Slot>
        <Slot $w={46}><svg width="10" height="10" viewBox="0 0 10 10"><path d="M0 0l10 10M10 0L0 10" stroke="#fff" /></svg></Slot>
      </WinControls>
    </TitleBar>

    <TabBar>
      <Tab>文件</Tab>
      <Tab $active>开始</Tab>
      {TABS.map(t => <Tab key={t}>{t}</Tab>)}
      <TellMe>
        <svg width="14" height="17" viewBox="0 0 14 17">
          <path d="M4.500 12c0-2.500-3.500-3.500-3.500-6.500a6 5 0 0 1 12 0c0 3-3.500 4-3.500 6.500zM5 14h4M6 16h2" fill="none" stroke="#fff" />
        </svg>
        操作说明搜索
      </TellMe>
      <Share>
        <svg width="15" height="16" viewBox="0 0 15 16">
          <circle cx="7" cy="5" r="4" fill="none" stroke="#fff" />
          <path d="M1 15c0-3 2-5 5-5.500M11 11v5M8.500 13.500h5" fill="none" stroke="#fff" />
        </svg>
        共享
      </Share>
    </TabBar>

    <RibbonPanel />

    <FormulaBar>
      <NameBox>A2<Tri $s={4} /></NameBox>
      <Dots><svg width="3" height="11" viewBox="0 0 3 11"><path d="M1 0h2v2H1zM1 4.500h2v2H1zM1 9h2v2H1z" fill="#aaa" /></svg></Dots>
      <FxBox>
        <Slot $w={36}><svg width="11" height="11" viewBox="0 0 11 11"><path d="M0 0l11 11M11 0L0 11" stroke="#c0c0c0" strokeWidth="1.600" /></svg></Slot>
        <Slot $w={36}><svg width="13" height="11" viewBox="0 0 13 11"><path d="M1 6l4 4 7-9" fill="none" stroke="#c0c0c0" strokeWidth="2" /></svg></Slot>
        <Slot $w={34}><FxGlyph>fx</FxGlyph></Slot>
      </FxBox>
      <InputBox><Slot $w={16}><svg width="9" height="6" viewBox="0 0 9 6"><path d="M1 1l3.500 3.500L8 1" fill="none" stroke="#777" strokeWidth="1.600" /></svg></Slot></InputBox>
    </FormulaBar>

    <Workspace>
      <Grid />
      <VScroll>
        <ScrollBtn><Tri $dir="up" $s={4} /></ScrollBtn>
        <VThumb />
        <VTrack />
        <ScrollBtn><Tri $s={4} /></ScrollBtn>
      </VScroll>
    </Workspace>

    <Footer>
      <NavArrows><Tri $dir="left" $c="#c0c0c0" /><Tri $dir="right" $c="#c0c0c0" /></NavArrows>
      <SheetTab>Sheet1</SheetTab>
      <AddSheet>
        <svg width="16" height="16" viewBox="0 0 16 16">
          <circle cx="8" cy="8" r="7.300" fill="none" stroke="#777" strokeWidth="1.300" />
          <path d="M8 3.500v9M3.500 8h9" stroke="#777" strokeWidth="1.500" />
        </svg>
      </AddSheet>
      <HScroll>
        <ArrowBox><Tri $dir="left" /></ArrowBox>
        <HThumb />
        <HTrack />
        <ArrowBox><Tri $dir="right" /></ArrowBox>
      </HScroll>
    </Footer>

    <Status>
      就绪
      <Slot $w={14} $ml={19}>
        <svg width="13" height="13" viewBox="0 0 13 13">
          <circle cx="3" cy="3" r="2.500" fill="#555" />
          <path d="M5 1.500h8v11H1V6.500h12M1 9.500h12M4.500 6.500v6M8.500 4v8.500" fill="none" stroke="#666" />
        </svg>
      </Slot>
      <ViewBtns>
        <ViewBtn $w={40} $active>
          <svg width="13" height="13" viewBox="0 0 13 13"><path d="M.5.500h12v12H.5zM4.500.5v12M8.500.5v12M.5 4.500h12M.5 8.500h12" fill="none" stroke="#666" /></svg>
        </ViewBtn>
        <ViewBtn $w={40}>
          <svg width="14" height="14" viewBox="0 0 14 14"><path d="M.5.500h13v13H.5zM3.500 3.500h7v7h-7zM5 5.500h4M5 7.500h4" fill="none" stroke="#666" /></svg>
        </ViewBtn>
        <ViewBtn $w={40}>
          <svg width="14" height="12" viewBox="0 0 14 12"><path d="M.5 11.500V.5h13v11zM5 .5v5h4v-5" fill="none" stroke="#666" /></svg>
        </ViewBtn>
      </ViewBtns>
      <Zoom>
        <ZoomMinus>−</ZoomMinus>
        <ZoomTrack><ZoomThumb /></ZoomTrack>
        <ZoomSign>+</ZoomSign>
        <ZoomText>100%</ZoomText>
      </Zoom>
    </Status>

    <MiniToolbar />
    <ContextMenu />

    <RedBox $l={53} $t={243} $w={182} $h={93} />
    <RedBox $l={245} $t={365} $w={170} $h={36} />

    <Watermark>
      <MarkTop>
        <MarkBai>Bai</MarkBai>
        <Paw>
          <svg width="55" height="60" viewBox="0 0 52 60">
            <g fill="rgba(255,255,255,.7)" stroke="#d4d4d4" strokeWidth="1.500">
              <ellipse cx="8" cy="22" rx="6" ry="9" />
              <ellipse cx="20" cy="9" rx="6" ry="8.500" />
              <ellipse cx="34" cy="9" rx="6" ry="8.500" />
              <ellipse cx="46" cy="22" rx="5.500" ry="9" />
              <path d="M26 23c7 0 10 7 15 12s7 23-15 23S5 43 11 35s8-12 15-12z" />
            </g>
          </svg>
          <MarkDu>du</MarkDu>
        </Paw>
        <MarkJy>经验</MarkJy>
      </MarkTop>
      <MarkUrl>jingyan.baidu.com</MarkUrl>
    </Watermark>
  </Win>
)

export default App
